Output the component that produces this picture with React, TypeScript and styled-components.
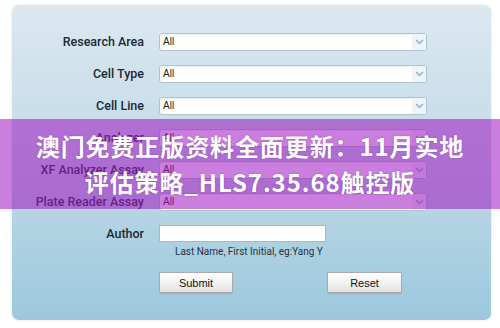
import React, { FC } from "react";
import styled, { createGlobalStyle } from "styled-components";

const GlobalStyle = createGlobalStyle`
  html, body {
    margin: 0;
    padding: 0;
    background: #ffffff;
  }
  body {
    width: 500px;
    height: 328px;
    overflow: hidden;
    position: relative;
    font-family: Roboto, "Liberation Sans", sans-serif;
  }
`;

const Page = styled.div`
  position: relative;
  width: 500px;
  height: 328px;
  padding-top: 5px;
  box-sizing: border-box;
`;

const Panel = styled.div`
  margin-left: 12px;
  width: 479px;
  height: 315px;
  box-sizing: border-box;
  padding-top: 28px;
  border-radius: 7px;
  background: linear-gradient(to bottom, #dce8f0 0%, #c4dbe8 45%, #9cc8dd 100%);
  box-shadow: 0 0 3px rgba(120, 150, 170, 0.25);
`;

const Form = styled.div`
  display: grid;
  grid-template-columns: 132px 268px;
  grid-auto-rows: minmax(18px, auto);
  column-gap: 15px;
  row-gap: 14px;
  align-items: start;
`;

const Label = styled.div`
  height: 18px;
  line-height: 18px;
  text-align: right;
  font-size: 12.5px;
  font-weight: 500;
  color: #1c2935;
  white-space: nowrap;
`;

const SelectBox = styled.div`
  display: flex;
  align-items: stretch;
  height: 18px;
  box-sizing: border-box;
  border: 1px solid #aec3d2;
  border-radius: 3px;
  background: #ffffff;
  box-shadow: inset 0 1px 1px rgba(0, 0, 0, 0.06);
  overflow: hidden;
`;

const SelectValue = styled.span`
  flex: 1;
  padding-left: 3px;
  font-family: "Liberation Sans", Arial, sans-serif;
  font-size: 10px;
  line-height: 16px;
  color: #222;
`;

const ArrowCell = styled.span`
  width: 14px;
  display: flex;
  align-items: center;
  justify-content: center;
  background: #eef4f8;
`;

const FieldStack = styled.div`
  display: flex;
  flex-direction: column;
`;

const TextInput = styled.div`
  width: 167px;
  height: 17px;
  box-sizing: border-box;
  border: 1px solid #a9b9c4;
  background: #ffffff;
`;

const Hint = styled.div`
  margin-top: 4px;
  padding-left: 16px;
  font-size: 10px;
  line-height: 12px;
  color: #26323c;
  white-space: nowrap;
`;

const Buttons = styled.div`
  display: flex;
  gap: 94px;
  margin-top: 14px;
`;

const Button = styled.button<{ $w: number }>`
  width: ${(p) => p.$w}px;
  height: 21px;
  padding: 0;
  border: 1px solid #a9a9a9;
  border-radius: 1px;
  background: linear-gradient(to bottom, #fefefe 0%, #f1f1f1 55%, #e1e1e1 100%);
  box-shadow: 0 1px 1px rgba(0, 0, 0, 0.12);
  font-family: "Liberation Sans", Arial, sans-serif;
  font-size: 11px;
  color: #111;
`;

const Banner = styled.div`
  position: absolute;
  left: 0;
  top: 119px;
  width: 500px;
  height: 90px;
  box-sizing: border-box;
  padding-top: 9px;
  background: rgba(160, 25, 195, 0.56);
  text-align: center;
  color: #ffffff;
  font-family: "Noto Sans CJK SC", "Noto Sans", sans-serif;
  font-weight: 700;
  font-size: 24px;
  line-height: 36px;
  letter-spacing: 0.9px;
  text-shadow: 0 0 2px rgba(80, 0, 100, 0.35);
`;

const Chevron: FC = () => (
  <svg width="9" height="6" viewBox="0 0 9 6">
    <path d="M1 1 L4.5 4.5 L8 1" fill="none" stroke="#8db6cc" strokeWidth="1.5" />
  </svg>
);

const Select: FC<{ value: string }> = ({ value }) => (
  <SelectBox>
    <SelectValue>{value}</SelectValue>
    <ArrowCell>
      <Chevron />
    </ArrowCell>
  </SelectBox>
);

const selectRows = [
  "Research Area",
  "Cell Type",
  "Cell Line",
  "Analyzer",
  "XF Analyzer Assay",
  "Plate Reader Assay",
];

export default function App() {
  return (
    <>
      <GlobalStyle />
      <Page>
        <Panel>
          <Form>
            {selectRows.map((name) => (
              <React.Fragment key={name}>
                <Label>{name}</Label>
                <Select value="All" />
              </React.Fragment>
            ))}
            <Label>Author</Label>
            <FieldStack>
              <TextInput />
              <Hint>Last Name, First Initial, eg:Yang Y</Hint>
              <Buttons>
                <Button $w={74}>Submit</Button>
                <Button $w={75}>Reset</Button>
              </Buttons>
            </FieldStack>
          </Form>
        </Panel>
        <Banner>
          澳门免费正版资料全面更新：11月实地
          <br />
          评估策略_HLS7.35.68触控版
        </Banner>
      </Page>
    </>
  );
}
